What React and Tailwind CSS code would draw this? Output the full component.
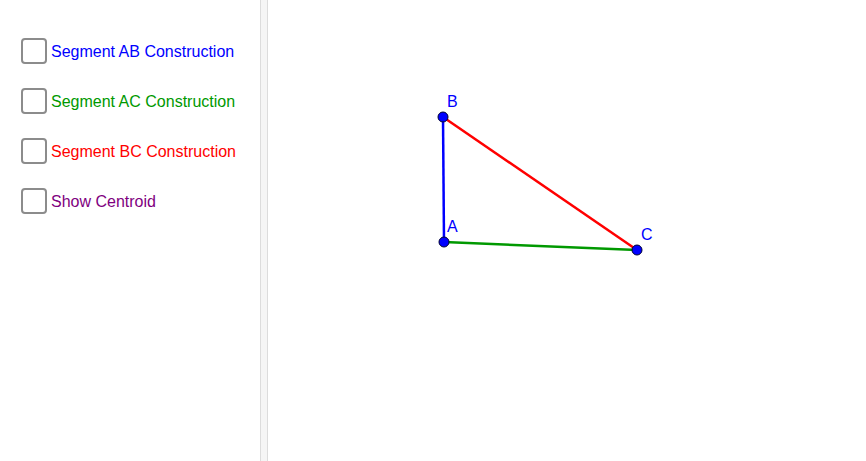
import React from 'react';

const items = [
  { label: 'Segment AB Construction', color: 'text-[#0000ff]' },
  { label: 'Segment AC Construction', color: 'text-[#009900]' },
  { label: 'Segment BC Construction', color: 'text-[#ff0000]' },
  { label: 'Show Centroid', color: 'text-[#800080]' },
];

const Point = ({ x, y }) => (
  <circle cx={x} cy={y} r="5" fill="#0000ff" stroke="#000033" strokeWidth="1" />
);

const App = () => {
  return (
    <div className="flex h-[461px] w-[866px] bg-white font-['Liberation_Sans',Arial,sans-serif] overflow-hidden">
      <div className="w-[260px] flex flex-col gap-6 pl-[21px] pt-[38px]">
        {items.map((item) => (
          <label key={item.label} className="flex items-center gap-1 h-[26px]">
            <span className="w-[26px] h-[26px] rounded-[4px] border-2 border-[#8c8c8c] bg-white shrink-0"></span>
            <span className={`text-[16px] leading-[26px] pt-[1px] ${item.color}`}>{item.label}</span>
          </label>
        ))}
      </div>
      <div className="w-[8px] h-full bg-[#f5f5f5] border-x border-[#dcdcdc]"></div>
      <div className="flex-1 relative">
        <svg width="598" height="461" viewBox="268 0 598 461" className="block">
          <line x1="443" y1="117" x2="444" y2="242" stroke="#0000ff" strokeWidth="2.5" />
          <line x1="444" y1="242" x2="637" y2="250" stroke="#009900" strokeWidth="2.5" />
          <line x1="443" y1="117" x2="637" y2="250" stroke="#ff0000" strokeWidth="2.5" />
          <Point x={443} y={117} />
          <Point x={444} y={242} />
          <Point x={637} y={250} />
          <text x="447" y="107" fill="#0000ff" fontSize="16" fontFamily="Liberation Sans, Arial, sans-serif">B</text>
          <text x="447" y="232" fill="#0000ff" fontSize="16" fontFamily="Liberation Sans, Arial, sans-serif">A</text>
          <text x="641" y="240" fill="#0000ff" fontSize="16" fontFamily="Liberation Sans, Arial, sans-serif">C</text>
        </svg>
      </div>
    </div>
  );
};

export default App;
